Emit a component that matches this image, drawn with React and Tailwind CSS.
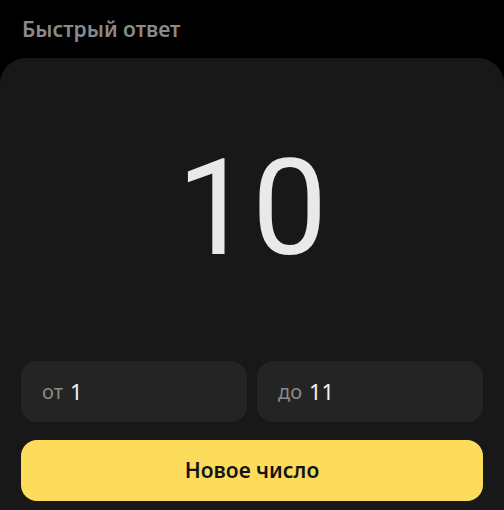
import React, { useState } from 'react';

const font = { fontFamily: '"Noto Sans", "Open Sans", sans-serif' };

const RangeField = ({ label, value }) => (
  <div className="flex h-[61px] items-center rounded-[16px] bg-[#242424] px-[21px]">
    <span className="text-[20px] text-[#8b8b8b]">{label}</span>
    <span className="ml-[7px] text-[22px] text-[#f2f2f2]">{value}</span>
  </div>
);

export default function App() {
  const [num] = useState(10);

  return (
    <div className="flex h-[510px] w-[504px] flex-col overflow-hidden bg-black" style={font}>
      <div className="px-[22px] pt-[13px] pb-[13px] text-[21px] font-semibold leading-[32px] text-[#8a8a8a]">
        Быстрый ответ
      </div>
      <div className="flex flex-1 flex-col rounded-t-[26px] bg-[#181818] px-[21px]">
        <div className="flex h-[303px] items-center justify-center pb-[2px]">
          <span className="text-[134px] font-normal leading-none text-[#e9e9e9]" style={{ fontFamily: 'Roboto, sans-serif' }}>
            {num}
          </span>
        </div>
        <div className="grid grid-cols-2 gap-[10px]">
          <RangeField label="от" value="1" />
          <RangeField label="до" value="11" />
        </div>
        <button className="mt-[18px] flex h-[61px] w-full items-center justify-center rounded-[16px] bg-[#fddc5c] text-[21px] font-semibold text-[#141414]">
          Новое число
        </button>
      </div>
    </div>
  );
}
